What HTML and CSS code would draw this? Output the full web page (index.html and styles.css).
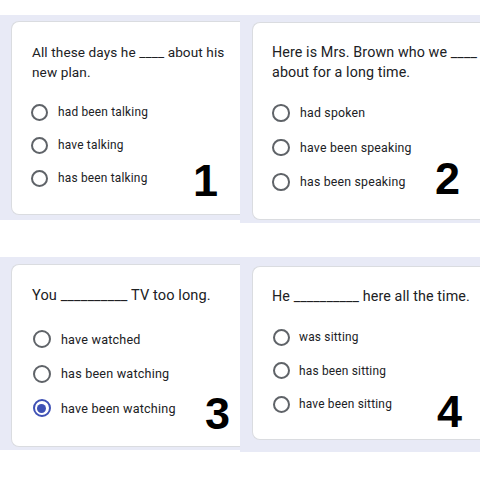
FILE: index.html
```html
<!DOCTYPE html>
<html lang="en">
<head>
<meta charset="utf-8">
<title>Tenses quiz</title>
<link rel="stylesheet" href="styles.css">
</head>
<body>
<main class="collage">
  <section class="panel panel--1">
    <div class="card">
      <p class="question">All these days he ____ about his<br>new plan.</p>
      <ul class="options">
        <li class="option"><span class="radio"></span><span class="label">had been talking</span></li>
        <li class="option"><span class="radio"></span><span class="label">have talking</span></li>
        <li class="option"><span class="radio"></span><span class="label">has been talking</span></li>
      </ul>
      <span class="num">1</span>
    </div>
  </section>
  <section class="panel panel--2">
    <div class="card">
      <p class="question">Here is Mrs. Brown who we ____<br>about for a long time.</p>
      <ul class="options">
        <li class="option"><span class="radio"></span><span class="label">had spoken</span></li>
        <li class="option"><span class="radio"></span><span class="label">have been speaking</span></li>
        <li class="option"><span class="radio"></span><span class="label">has been speaking</span></li>
      </ul>
      <span class="num">2</span>
    </div>
  </section>
  <section class="panel panel--3">
    <div class="card">
      <p class="question">You __________ TV too long.</p>
      <ul class="options">
        <li class="option"><span class="radio"></span><span class="label">have watched</span></li>
        <li class="option"><span class="radio"></span><span class="label">has been watching</span></li>
        <li class="option"><span class="radio radio--checked"></span><span class="label">have been watching</span></li>
      </ul>
      <span class="num">3</span>
    </div>
  </section>
  <section class="panel panel--4">
    <div class="card">
      <p class="question">He __________ here all the time.</p>
      <ul class="options">
        <li class="option"><span class="radio"></span><span class="label">was sitting</span></li>
        <li class="option"><span class="radio"></span><span class="label">has been sitting</span></li>
        <li class="option"><span class="radio"></span><span class="label">have been sitting</span></li>
      </ul>
      <span class="num">4</span>
    </div>
  </section>
</main>
</body>
</html>
```
FILE: styles.css
```css
html, body {
  margin: 0;
  padding: 0;
  background: #ffffff;
}

body {
  font-family: Roboto, "Noto Sans", Arial, sans-serif;
  color: #202124;
  width: 480px;
  height: 480px;
  overflow: hidden;
}

.collage {
  display: grid;
  grid-template-columns: 240px 240px;
  row-gap: 34px;
  align-items: start;
  padding-top: 15px;
}

.panel {
  background: #e8eaf6;
  overflow: hidden;
}

.card {
  position: relative;
  box-sizing: border-box;
  background: #ffffff;
  border: 1px solid #dadce0;
  border-right: none;
  border-radius: 8px 0 0 8px;
  padding: var(--pad-top) 0 0 var(--pad-left);
  height: var(--card-h);
}

.question {
  margin: 0 0 var(--q-gap);
  font-size: var(--q-size);
  line-height: var(--q-lh);
  letter-spacing: 0.1px;
  white-space: nowrap;
}

.options {
  list-style: none;
  margin: 0;
  padding: 0;
}

.option {
  display: flex;
  align-items: center;
  height: var(--row);
  gap: var(--radio-gap);
  font-size: var(--o-size);
  letter-spacing: 0.2px;
}

.radio {
  position: relative;
  box-sizing: border-box;
  flex: none;
  width: var(--radio);
  height: var(--radio);
  margin-left: var(--radio-shift);
  border: 2px solid #5f6368;
  border-radius: 50%;
}

.radio--checked {
  border-color: #3f51b5;
}

.radio--checked::after {
  content: "";
  position: absolute;
  inset: 2.5px;
  border-radius: 50%;
  background: #3f51b5;
}

.num {
  position: absolute;
  right: var(--num-right);
  bottom: var(--num-bottom);
  font-family: "Liberation Sans", Arial, sans-serif;
  font-weight: 700;
  font-size: 45px;
  line-height: 1;
  color: #000000;
}

.panel--1 {
  padding: 6px 0 5px 11px;
  --card-h: 194px;
  --pad-top: 20px;
  --pad-left: 20px;
  --q-size: 13.6px;
  --q-lh: 20px;
  --q-gap: 13.5px;
  --o-size: 11.9px;
  --row: 33px;
  --radio: 17px;
  --radio-gap: 10.5px;
  --radio-shift: -1.5px;
  --num-right: 22px;
  --num-bottom: 11px;
}

.panel--2 {
  padding: 7px 0 3px 12px;
  --card-h: 198px;
  --pad-top: 19px;
  --pad-left: 19px;
  --q-size: 14.3px;
  --q-lh: 20px;
  --q-gap: 13.75px;
  --o-size: 12.3px;
  --row: 34.5px;
  --radio: 17.6px;
  --radio-gap: 10.5px;
  --radio-shift: 0px;
  --num-right: 20px;
  --num-bottom: 18px;
}

.panel--3 {
  padding: 7px 0 3px 11px;
  --card-h: 183px;
  --pad-top: 19.5px;
  --pad-left: 20px;
  --q-size: 14.6px;
  --q-lh: 21px;
  --q-gap: 16.25px;
  --o-size: 12.6px;
  --row: 34.5px;
  --radio: 18px;
  --radio-gap: 10.3px;
  --radio-shift: 0.7px;
  --num-right: 10px;
  --num-bottom: 10px;
}

.panel--4 {
  padding: 9px 0 12px 12px;
  --card-h: 174px;
  --pad-top: 19px;
  --pad-left: 19px;
  --q-size: 14.3px;
  --q-lh: 20px;
  --q-gap: 14.25px;
  --o-size: 11.9px;
  --row: 33.5px;
  --radio: 17px;
  --radio-gap: 9.5px;
  --radio-shift: 0.5px;
  --num-right: 18px;
  --num-bottom: 5px;
}
```
